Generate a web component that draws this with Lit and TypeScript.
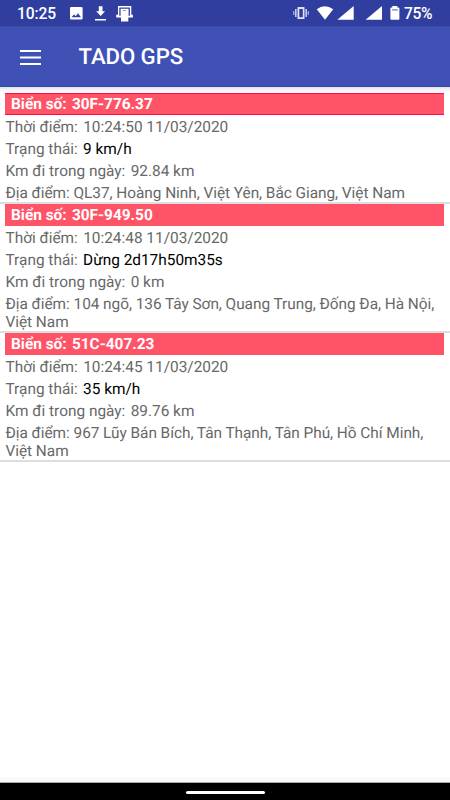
import { LitElement, html, css } from "lit";
import { customElement, property } from "lit/decorators.js";

interface Vehicle {
  plate: string;
  time: string;
  status: string;
  distance: string;
  place: string;
}

const vehicles: Vehicle[] = [
  { plate: "30F-776.37", time: "10:24:50 11/03/2020", status: "9 km/h", distance: "92.84 km", place: "QL37, Hoàng Ninh, Việt Yên, Bắc Giang, Việt Nam" },
  { plate: "30F-949.50", time: "10:24:48 11/03/2020", status: "Dừng 2d17h50m35s", distance: "0 km", place: "104 ngõ, 136 Tây Sơn, Quang Trung, Đống Đa, Hà Nội, Việt Nam" },
  { plate: "51C-407.23", time: "10:24:45 11/03/2020", status: "35 km/h", distance: "89.76 km", place: "967 Lũy Bán Bích, Tân Thạnh, Tân Phú, Hồ Chí Minh, Việt Nam" },
];

@customElement("status-bar")
class StatusBar extends LitElement {
  static styles = css`
    :host { display: flex; height: 26px; flex: none; background: #303f9f; color: #fff; }
    .side { display: flex; align-items: center; height: 27px; }
    .left { padding-left: 17px; }
    .right { margin-left: auto; padding-right: 17px; }
    .clock { width: 52px; font-size: 15.6px; font-weight: 500; letter-spacing: -0.1px; padding-top: 1px; }
    .battery { font-size: 15.6px; font-weight: 500; width: 29px; white-space: nowrap; letter-spacing: -0.4px; padding-top: 1px; }
    svg { display: block; fill: #fff; }
  `;
  render() {
    return html`
      <div class="side left">
        <span class="clock">10:25</span>
        <svg width="66" height="27" viewBox="69 0 66 27">
          <path fill-rule="evenodd" d="M71.300 7h10a1.300 1.300 0 0 1 1.300 1.300v10a1.300 1.300 0 0 1-1.300 1.300h-10a1.300 1.300 0 0 1-1.300-1.300v-10A1.300 1.300 0 0 1 71.300 7ZM71.700 17.300h9.300l-3-4-2.300 3-1.700-2Z" />
          <path d="M98.800 6.300h3.700v5h2.600l-4.450 4.700-4.450-4.700h2.600ZM95 18.900h11v1.600H95Z" />
          <path fill-rule="evenodd" d="M118 6h13.300v8.800h1.600v2.700h-4.600V21.500h-7.300v-4h-4.800v-2.700H118ZM119.300 7.500v8.300h1.300V8.800h8v7h1.300V7.500Z" />
          <path fill="#8d97d0" d="M122.700 10h3.400v1h-3.400Z" />
        </svg>
      </div>
      <div class="side right">
        <svg width="112" height="27" viewBox="292 0 112 27">
          <path fill="#dfe2f6" fill-rule="evenodd" d="M298 6.900h6q.5 0 .5.600v11q0 .6-.5.600h-6q-.5 0-.5-.6v-11q0-.6.5-.6ZM299.300 8.900v8.300h3.500V8.900Z" />
          <path fill="#c5caf0" d="M295 9h1.600v8H295ZM293.200 11.300h1.100v3.500h-1.100ZM305.400 9h1.600v8h-1.600ZM307.700 11.300h1.100v3.500h-1.100Z" />
          <path d="M316.700 9.200Q324.800 3.100 333.200 9.200L325 19.700Z" />
          <path d="M353.700 6v13.800h-16.400ZM382 6v13.800h-16.400Z" />
          <path d="M392.300 6h5v1.400h1.300q.8 0 .8.800v10.700q0 .8-.8.800h-7.400q-.8 0-.8-.8V8.200q0-.8.8-.8h1.100Z" />
          <path fill="#8c96cf" d="M392 9.100h5.900v1.500H392Z" />
        </svg>
        <span class="battery">75%</span>
      </div>
    `;
  }
}

@customElement("vehicle-card")
class VehicleCard extends LitElement {
  @property({ attribute: false }) vehicle!: Vehicle;
  static styles = css`
    :host { display: block; border-bottom: 2px solid #dedede; color: #686868; font-size: 15.4px; font-weight: 400; text-rendering: geometricPrecision; }
    .plate { height: 22px; margin: 0 6px 1px 5px; padding-left: 6px; box-sizing: border-box; line-height: 22px; background: #ff5468; color: #fff; font-weight: 700; font-size: 15.4px; }
    .gap { margin-left: 1.5px; }
    :host(.selected) .plate { box-shadow: inset 0 1px #ff0b43, inset 0 -1px #ff0b43; }
    .row { height: 22px; line-height: 22px; padding-left: 5.500px; white-space: nowrap; }
    .status { color: #000; }
    .place { padding: 2px 8px 0 5.500px; line-height: 18px; letter-spacing: -0.04px; }
  `;
  render() {
    const v = this.vehicle;
    return html`
      <div class="plate">Biển số: <span class="gap">${v.plate}</span></div>
      <div class="row">Thời điểm: <span class="gap">${v.time}</span></div>
      <div class="row">Trạng thái: <span class="gap status">${v.status}</span></div>
      <div class="row">Km đi trong ngày: <span class="gap">${v.distance}</span></div>
      <div class="place">Địa điểm: ${v.place}</div>
    `;
  }
}

@customElement("app-root")
class AppRoot extends LitElement {
  static styles = css`
    :host { display: flex; flex-direction: column; height: 800px; overflow: hidden; background: #fff; font-family: Roboto, "Noto Sans", sans-serif; }
    .toolbar { display: flex; align-items: center; height: 61px; flex: none; box-sizing: border-box; padding: 2px 0 0 20px; background: #3f51b5; border-bottom: 1px solid #3548ae; box-shadow: inset 0 1px #394aa9; color: #fff; }
    .menu { display: block; fill: #fff; width: 21px; height: 15px; }
    .title { margin-left: 37.500px; font-size: 22.2px; font-weight: 500; letter-spacing: -0.08px; text-rendering: geometricPrecision; }
    .list { flex: 1; padding-top: 6px; background: linear-gradient(#e2e2e2, #f5f5f5 3px, #fff 6px); }
    .foot { flex: none; height: 5px; background: #fafafa; border-bottom: 1px solid #aaa; }
    .nav { flex: none; height: 17px; background: #000; display: flex; justify-content: center; align-items: center; }
    .pill { width: 79px; height: 3px; border-radius: 2px; background: #fff; margin-top: 1px; }
  `;
  render() {
    return html`
      <status-bar></status-bar>
      <div class="toolbar">
        <svg class="menu" viewBox="0 0 21 15"><path d="M0 0h21v2H0ZM0 6.500h21v2H0ZM0 13h21v2H0Z" /></svg>
        <span class="title">TADO GPS</span>
      </div>
      <div class="list">
        ${vehicles.map((v, i) => html`<vehicle-card class=${i === 0 ? "selected" : ""} .vehicle=${v}></vehicle-card>`)}
      </div>
      <div class="foot"></div>
      <div class="nav"><div class="pill"></div></div>
    `;
  }
}
